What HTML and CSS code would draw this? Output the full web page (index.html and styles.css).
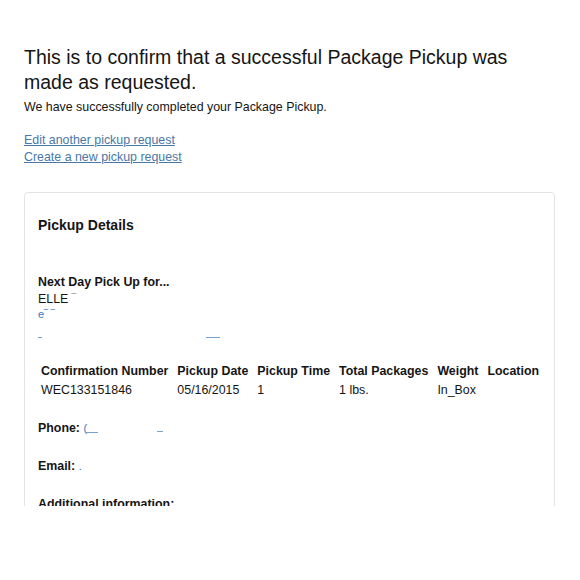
FILE: index.html
```html
<!DOCTYPE html>
<html>
<head>
<meta charset="utf-8">
<link rel="stylesheet" href="styles.css">
</head>
<body>
<div class="viewport">
  <h1 class="title">This is to confirm that a successful Package Pickup was made as requested.</h1>
  <p class="sub">We have successfully completed your Package Pickup.</p>
  <div class="links">
    <a href="#" class="link">Edit another pickup request</a>
    <a href="#" class="link">Create a new pickup request</a>
  </div>
  <div class="card">
    <h2 class="card-title">Pickup Details</h2>
    <div class="pickup-for">
      <div class="label">Next Day Pick Up for...</div>
      <div class="name">ELLE <span class="faint">&#8254;</span></div>
      <div class="redact-line"><span class="blue-frag">e&#8254; &#8254;</span></div>
      <div class="redact-line2"><span class="mark m1"></span><span class="mark m2"></span></div>
    </div>
    <table class="details">
      <thead>
        <tr><th>Confirmation Number</th><th>Pickup Date</th><th>Pickup Time</th><th>Total Packages</th><th>Weight</th><th>Location</th></tr>
      </thead>
      <tbody>
        <tr><td>WEC133151846</td><td>05/16/2015</td><td>1</td><td>1 lbs.</td><td>In_Box</td><td></td></tr>
      </tbody>
    </table>
    <div class="field first"><span class="label">Phone:</span> <span class="blue-frag">(<span class="mark m3"></span></span><span class="mark m4"></span></div>
    <div class="field"><span class="label">Email:</span> <span class="blue-frag small">.</span></div>
    <div class="field"><span class="label">Additional information:</span></div>
  </div>
</div>
</body>
</html>
```
FILE: styles.css
```css
html, body {
  margin: 0;
  padding: 0;
  background: #fff;
}
body {
  font-family: "Liberation Sans", Arial, sans-serif;
  color: #151515;
}
.viewport {
  height: 506px;
  overflow: hidden;
  padding: 0 25px 0 24px;
  box-sizing: border-box;
}
.title {
  margin: 0;
  padding-top: 45px;
  font-size: 19.5px;
  font-weight: normal;
  line-height: 25px;
  width: 500px;
  color: #151515;
}
.sub {
  margin: 4px 0 0 0;
  font-size: 12.4px;
  line-height: 16px;
}
.links {
  margin-top: 17px;
  display: flex;
  flex-direction: column;
  align-items: flex-start;
}
.link {
  font-size: 12.4px;
  line-height: 17px;
  color: #4a78a6;
  text-decoration: underline;
}
.card {
  margin-top: 26px;
  border: 1px solid #e3e3e3;
  border-radius: 4px;
  padding: 23px 13px 0 13px;
  min-height: 400px;
}
.card-title {
  margin: 0;
  font-size: 14px;
  font-weight: bold;
  line-height: 18px;
}
.pickup-for {
  margin-top: 40px;
  font-size: 12.4px;
  line-height: 17px;
}
.label {
  font-weight: bold;
  font-size: 12.4px;
}
.name {
  line-height: 17px;
}
.faint {
  color: #999;
}
.blue-frag {
  color: #3a74c4;
  font-size: 11px;
}
.redact-line {
  height: 15px;
  line-height: 12px;
  overflow: hidden;
}
.redact-line2 {
  position: relative;
  height: 26px;
}
.mark {
  position: absolute;
  height: 1px;
  background: #7aa2d0;
}
.m1 { left: 0; top: 14px; width: 4px; }
.m2 { left: 168px; top: 14px; width: 14px; }
.details {
  margin-top: 12px;
  border-collapse: separate;
  border-spacing: 2px;
  font-size: 12.4px;
}
.details th, .details td {
  text-align: left;
  padding: 1px 6px 1px 1px;
  line-height: 15px;
  white-space: nowrap;
}
.details td {
  font-weight: normal;
}
.field {
  margin-top: 21px;
  line-height: 17px;
  position: relative;
  font-size: 12.4px;
}
.field.first {
  margin-top: 19px;
}
.field .blue-frag {
  position: relative;
  display: inline-block;
  width: 80px;
}
.m3 { left: 3px; top: 12px; width: 12px; }
.m4 { left: 119px; top: 11px; width: 6px; }
.small { width: auto !important; }
```
